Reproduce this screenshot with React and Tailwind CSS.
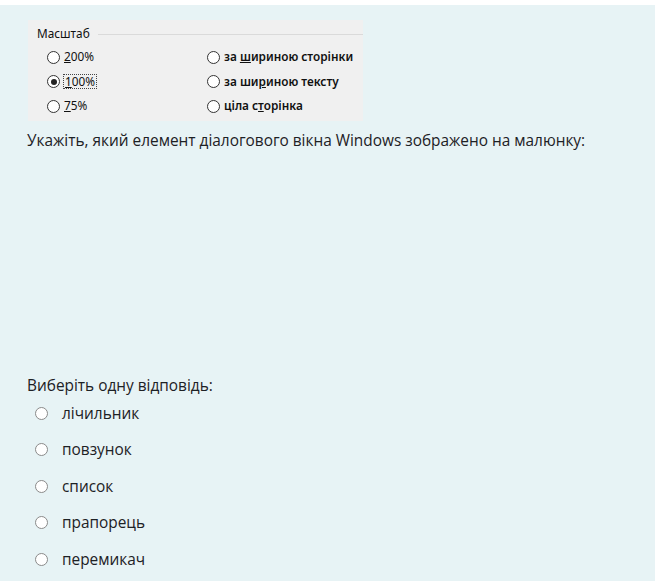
import React from 'react';

const Dot = ({ checked }) => (
  <span className="relative inline-block w-[13px] h-[13px] rounded-full border border-[#333] bg-white shrink-0">
    {checked && <span className="absolute left-[2.5px] top-[2.5px] w-[6px] h-[6px] rounded-full bg-[#222]" />}
  </span>
);

const ScaleRow = ({ checked, children, focus }) => (
  <div className="flex items-center gap-[3px] h-[24.5px]">
    <Dot checked={checked} />
    <span className={focus ? 'border border-dotted border-[#444] px-[1px] leading-[13px]' : 'px-[1px]'}>{children}</span>
  </div>
);

const Option = ({ label }) => (
  <label className="flex items-center h-[36.5px] pl-[35px]">
    <span className="w-[13px] h-[13px] rounded-full border border-[#8a8a8a] bg-white" />
    <span className="ml-[14px]">{label}</span>
  </label>
);

export default function App() {
  return (
    <div className="bg-white w-[657px] h-[585px] pt-[5px]" style={{ fontFamily: '"Open Sans", "Noto Sans", sans-serif' }}>
      <div className="bg-[#e7f3f5] w-[655px] h-[576px] text-[#1d2125]">
        {/* picture of the scale dialog */}
        <div className="pt-[15px] pl-[28px]">
          <div className="w-[335px] h-[101px] bg-[#f0f0f0] text-[11.8px] text-[#111] pl-[9px] pt-[6px]" style={{ fontFamily: '"Noto Sans", sans-serif' }}>
            <div className="flex items-center h-[16px]">
              <span>Масштаб</span>
              <span className="ml-[8px] flex-1 h-px bg-[#dadada]" />
            </div>
            <div className="grid grid-cols-[160px_1fr] pl-[10px] pt-[3px]">
              <div>
                <ScaleRow><u>2</u>00%</ScaleRow>
                <ScaleRow checked focus><u>1</u>00%</ScaleRow>
                <ScaleRow><u>7</u>5%</ScaleRow>
              </div>
              <div className="font-semibold">
                <ScaleRow>за <u>ш</u>ириною сторінки</ScaleRow>
                <ScaleRow>за ши<u>р</u>иною тексту</ScaleRow>
                <ScaleRow>ціла с<u>т</u>орінка</ScaleRow>
              </div>
            </div>
          </div>
        </div>

        <p className="mt-[9px] pl-[27px] text-[15.4px] leading-[22px]">
          Укажіть, який елемент діалогового вікна Windows зображено на малюнку:
        </p>

        <p className="mt-[223px] pl-[27px] text-[15.4px] leading-[22px]">Виберіть одну відповідь:</p>

        <div className="text-[15.4px] -mt-[2px]">
          <Option label="лічильник" />
          <Option label="повзунок" />
          <Option label="список" />
          <Option label="прапорець" />
          <Option label="перемикач" />
        </div>
      </div>
    </div>
  );
}
